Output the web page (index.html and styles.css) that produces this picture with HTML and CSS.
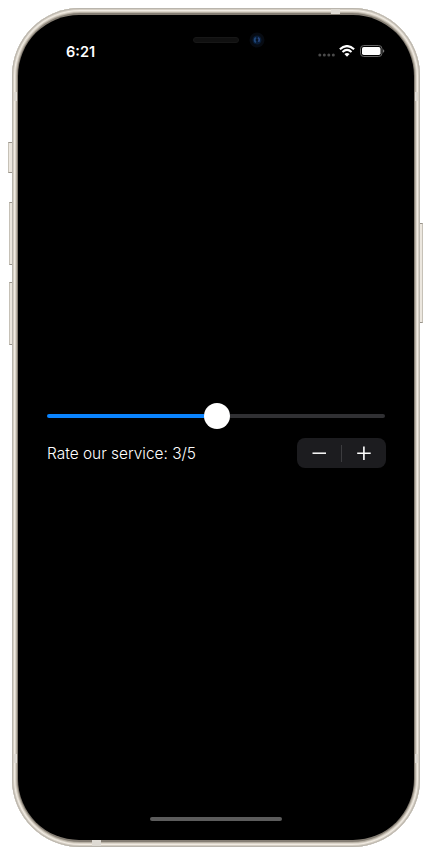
FILE: index.html
```html
<!DOCTYPE html>
<html lang="en">
<head>
<meta charset="utf-8">
<title>Rating</title>
<link rel="stylesheet" href="styles.css">
</head>
<body>
<div class="phone">
  <i class="key mute"></i><i class="key vol-up"></i><i class="key vol-down"></i><i class="key power"></i>
  <i class="band top"></i><i class="band bottom"></i><i class="band side l1"></i><i class="band side l2"></i><i class="band side r1"></i><i class="band side r2"></i>
  <main class="screen">
    <header class="status">
      <span class="time">6:21</span>
      <span class="notch"><i class="speaker"></i>
        <svg class="camera" width="16" height="16" viewBox="0 0 16 16"><circle cx="8" cy="8" r="7.5" fill="#070b12"/><circle cx="8" cy="8" r="4.5" fill="#091c36"/><path d="M6.8 5.5Q4.5 8 6.8 10.5" fill="none" stroke="#1f4779" stroke-width="1.8"/><path d="M9 5.6Q11.3 7 9.6 9.8" fill="none" stroke="#28457c" stroke-width="1.5"/><circle cx="8" cy="8" r=".9" fill="#071020"/></svg>
      </span>
      <span class="indicators">
        <svg width="18" height="4" viewBox="0 0 18 4" class="signal"><g fill="#4b4b4b"><circle cx="1.8" cy="2" r="1.5"/><circle cx="6.3" cy="2" r="1.5"/><circle cx="10.8" cy="2" r="1.5"/><circle cx="15.3" cy="2" r="1.5"/></g></svg>
        <svg width="16" height="12" viewBox="0 0 16 12" class="wifi"><g fill="none" stroke="#fff" stroke-width="2.1"><path d="M.9 4.3Q8-2.2 15.1 4.3"/><path d="M3.5 7Q8 2.9 12.5 7"/></g><path d="M5.4 9Q8 6.8 10.6 9L8 11.7Z" fill="#fff"/></svg>
        <svg width="25" height="12" viewBox="0 0 25 12" class="battery"><rect x=".5" y=".5" width="21.5" height="11" rx="3.3" fill="none" stroke="#666"/><rect x="2" y="2" width="18.5" height="8" rx="1.8" fill="#fff"/><path d="M23 4.2Q24.3 4.8 24.3 6T23 7.8Z" fill="#777"/></svg>
      </span>
    </header>
    <section class="rating">
      <div class="slider"><i class="fill"></i><i class="thumb"></i><i class="rest"></i></div>
      <div class="row">
        <svg class="label" width="151" height="24"><text x="0" y="18" textLength="149" lengthAdjust="spacingAndGlyphs">Rate our service: 3/5</text></svg>
        <div class="stepper">
          <svg width="44" height="30" viewBox="0 0 44 30"><path d="M15.5 15.2H29" stroke="#fff" stroke-width="1.5"/></svg>
          <i class="divider"></i>
          <svg width="44" height="30" viewBox="0 0 44 30"><path d="M15.2 15.2H28.7M21.9 8.5V22" stroke="#fff" stroke-width="1.6"/></svg>
        </div>
      </div>
    </section>
    <div class="home"></div>
  </main>
</div>
</body>
</html>
```
FILE: styles.css
```css
* { box-sizing: border-box; }
body { margin: 0; background: #fff; font-family: Inter, "Liberation Sans", sans-serif; }
i, svg { display: block; flex: none; }
.phone {
  position: relative;
  width: 408px;
  height: 839px;
  margin: 8px 12px;
  padding: 7px 6px;
  border-radius: 68px;
  background: #857e74;
  box-shadow: inset 0 0 0 1px #b9b5ad, inset 0 0 0 2px #d5cec3, inset 0 0 0 3px #f0ebe3, inset 0 0 0 4px #dcd5ca, inset 0 0 0 5px #b8b1a5;
}
.screen {
  display: flex;
  flex-direction: column;
  height: 825px;
  border-radius: 61px;
  background: #000;
  color: #fff;
}
.key { position: absolute; left: -3px; width: 3px; border: 1px solid #c6c1b7; border-width: 1px 0 1px 1px; border-top-color: #99948b; border-bottom-color: #99948b; background: #ece7df; }
.mute { top: 134px; left: -4px; width: 4px; height: 31px; }
.vol-up { top: 194px; height: 63px; }
.vol-down { top: 274px; height: 63px; }
.power { left: 408px; top: 215px; height: 100px; border-width: 1px 1px 1px 0; }
.band { position: absolute; background: #dedad3; }
.top { left: 319px; top: 1px; width: 9px; height: 5px; }
.bottom { left: 80px; bottom: 1px; width: 9px; height: 6px; }
.side { width: 3px; height: 9px; }
.l1, .l2 { left: 2px; }
.r1, .r2 { right: 2px; }
.l1, .r1 { top: 84px; }
.l2, .r2 { top: 746px; }
.status { display: grid; grid-template-columns: 175px 76px 1fr; height: 51px; padding-top: 17px; }
.time { padding: 11px 0 0 48px; font-size: 14.5px; line-height: 18px; font-weight: 600; letter-spacing: 0; }
.notch { display: flex; height: 16px; gap: 10px; align-items: center; }
.speaker { width: 46px; height: 6px; border: 1px solid #171717; border-radius: 3px; background: #101010; }
.indicators { display: flex; align-items: flex-start; padding: 13px 0 0 48px; }
.signal { margin: 8px 3px 0 1px; }
.wifi { margin-right: 5px; }
.rating { width: 340px; margin: 336px 0 0 28px; }
.slider { display: flex; align-items: center; height: 28px; padding: 0 1px; }
.fill, .rest { height: 4px; background: #0a84ff; border-radius: 2px; }
.fill { width: 159px; margin-right: -2px; }
.thumb { position: relative; width: 26px; height: 26px; margin-top: -1px; border-radius: 50%; background: #fff; }
.rest { flex: 1; margin-left: -2px; background: #303033; }
.row { display: flex; align-items: center; justify-content: space-between; margin-top: 8px; }
.label { margin-left: 1px; overflow: visible; font-size: 16px; font-weight: 350; fill: #fff; }
.stepper { display: flex; align-items: center; width: 89px; height: 30px; border-radius: 8px; background: #1c1c1f; }
.divider { width: 1px; height: 17px; background: #3c3c3f; }
.home { width: 132px; height: 4px; margin: auto auto 19px; border-radius: 3px; background: #5c5c5c; }
```
